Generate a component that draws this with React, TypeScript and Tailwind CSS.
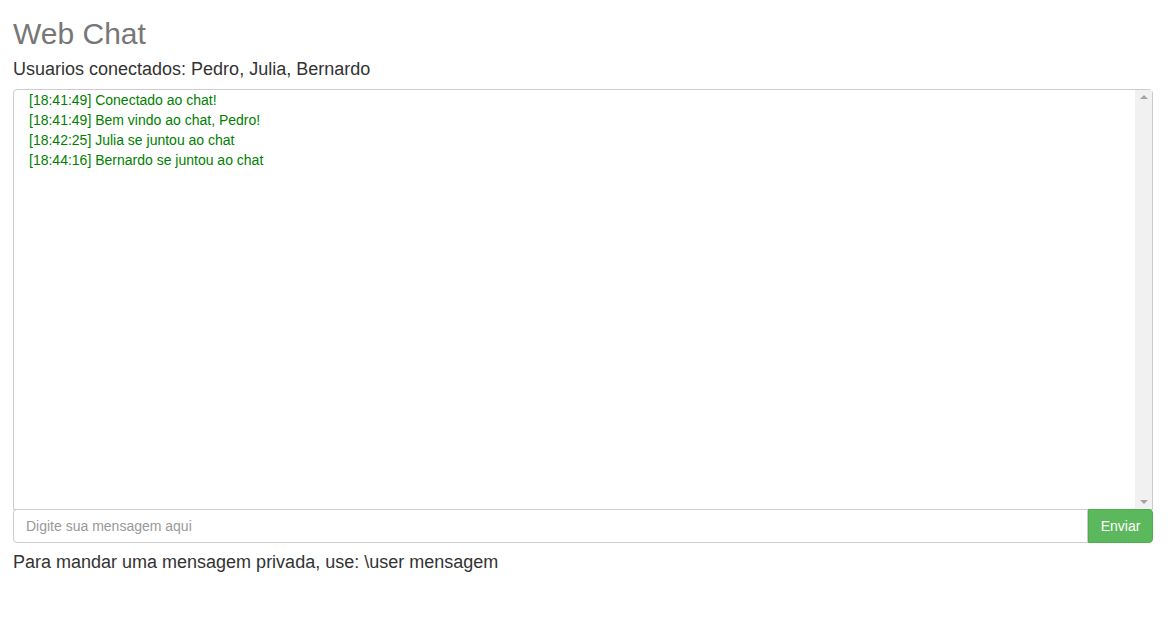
import React from 'react';

const messages = [
  { time: '18:41:49', text: 'Conectado ao chat!' },
  { time: '18:41:49', text: 'Bem vindo ao chat, Pedro!' },
  { time: '18:42:25', text: 'Julia se juntou ao chat' },
  { time: '18:44:16', text: 'Bernardo se juntou ao chat' },
];

export default function App() {
  return (
    <div className="min-h-[617px] bg-white pl-[13px] pr-[21px] font-['Liberation_Sans',Arial,sans-serif] text-[#333]">
      {/* Cabeçalho */}
      <h2 className="pt-[17px] text-[30px] leading-[33px] text-[#777]">Web Chat</h2>
      <p className="mt-[7px] text-[18px] leading-[25px]">
        Usuarios conectados: Pedro, Julia, Bernardo
      </p>

      {/* Caixa de mensagens */}
      <div className="mt-[7px] flex h-[421px] rounded-t-[4px] border border-[#ccc] bg-white">
        <ul className="flex-1 pl-[15px] text-[14px] leading-[20px] text-[#008000]">
          {messages.map((m, i) => (
            <li key={i}>
              [{m.time}] {m.text}
            </li>
          ))}
        </ul>
        {/* Barra de rolagem */}
        <div className="flex w-[17px] flex-col items-center justify-between bg-[#f1f1f1] py-[5px]">
          <div className="h-0 w-0 border-x-[4px] border-b-[4px] border-x-transparent border-b-[#a3a3a3]" />
          <div className="h-0 w-0 border-x-[4px] border-t-[4px] border-x-transparent border-t-[#a3a3a3]" />
        </div>
      </div>

      {/* Campo de envio */}
      <div className="-mt-px flex h-[34px]">
        <input
          className="h-full flex-1 rounded-l-[4px] border border-[#ccc] px-[12px] text-[14px] text-[#555] outline-none placeholder:text-[#999]"
          placeholder="Digite sua mensagem aqui"
        />
        <button className="h-full w-[65px] rounded-r-[4px] border border-[#4cae4c] bg-[#5cb85c] text-[14px] text-white">
          Enviar
        </button>
      </div>

      <p className="mt-[7px] text-[18px] leading-[25px]">
        Para mandar uma mensagem privada, use: \user mensagem
      </p>
    </div>
  );
}
